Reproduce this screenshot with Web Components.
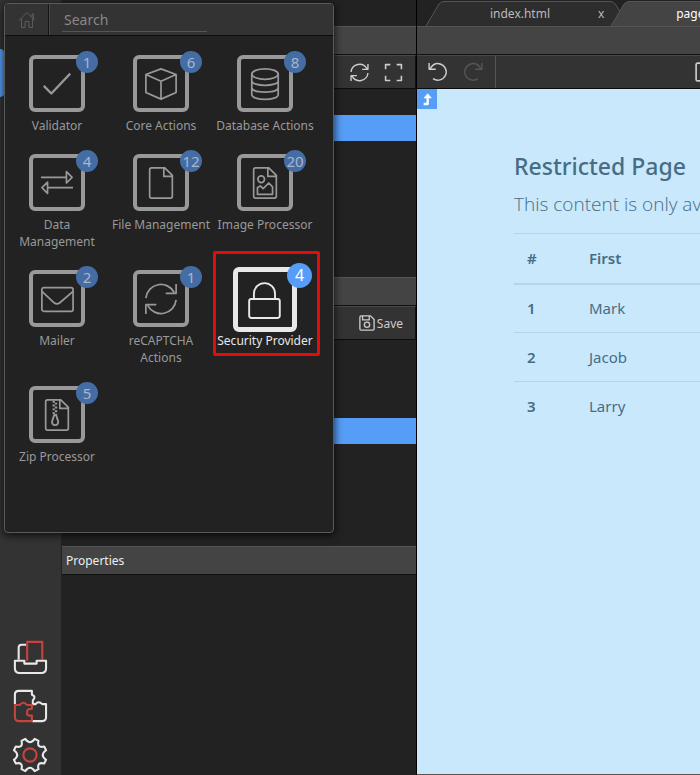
<!DOCTYPE html>
<html lang="en">
<head>
<meta charset="utf-8">
<title>App editor</title>
<style>
html,body{height:100%}
body{margin:0;background:#222;overflow:hidden;font-family:"Noto Sans","Open Sans",sans-serif;font-size:12px;line-height:17px;color:#ddd}
</style>
</head>
<body>
<app-shell></app-shell>
<script>
const ICONS = {
  check:'<path d="M4 20 12 28 32 7" stroke-width="2.4"/>',
  cube:'<path d="M18 2 34 8V27L18 34 2 27V8ZM2 8 18 15 34 8M18 15V34"/>',
  database:'<ellipse cx="18" cy="7.500" rx="14" ry="5.500"/><path d="M4 7V29C4 36 32 36 32 29V7M4 14.500C4 21 32 21 32 14.500M4 22C4 28 32 28 32 22"/>',
  swap:'<path d="M1 12H28M28 6 34 12 28 18ZM35 23H8M8 17 2 23 8 29Z"/>',
  file:'<path d="M8 2H22L30 10V32Q30 34 28 34H8Q6 34 6 32V4Q6 2 8 2ZM21 2V11H30"/>',
  image:'<path d="M8 2H22L30 10V32Q30 34 28 34H8Q6 34 6 32V4Q6 2 8 2ZM21 2V11H30M10 30V23L13 21 16 24 22 18 26 22V30Z"/><circle cx="14" cy="14" r="3.500"/>',
  mail:'<rect x="2" y="6" width="33" height="25" rx="2"/><path d="M2 10 15 22Q18 24.500 21 22L35 10"/>',
  refresh:'<path d="M2 17A16 16 0 0 1 32 11M34 19A16 16 0 0 1 4 25M34 2V12H23M2 34V24H13"/>',
  lock:'<rect x="3" y="17" width="29" height="18" rx="2"/><path d="M7.500 17V12A10 10 0 0 1 27.500 12V17"/>',
  zip:'<path d="M8 2H22L30 10V32Q30 34 28 34H8Q6 34 6 32V4Q6 2 8 2ZM21 2V11H30"/><path d="M14.500 3V18M17 5V18" stroke-width="2.500" stroke-dasharray="2 2"/><path d="M15 18H17L19 24A3.300 3.300 0 1 1 13 24Z" stroke-width="2"/>',
  home:'<path d="M2 19 18 3 34 19M7 15V33H14V21H22V33H29V15M28 12V6H31V16" stroke-width="2"/>',
  expand:'<path d="M3 12V3H12M24 3H33V12M33 24V33H24M12 33H3V24" stroke-width="3"/>',
  undo:'<path d="M2 2V13H14M4 12C8 5 14 2 20 3A15 15 0 1 1 9 30" stroke-width="2.6"/>',
  redo:'<path d="M34 2V13H22M32 12C28 5 22 2 16 3A15 15 0 1 0 27 30" stroke-width="2.6"/>',
  sync:'<path d="M2 17A16 16 0 0 1 32 11M34 19A16 16 0 0 1 4 25M34 2V12H23M2 34V24H13" stroke-width="2.6"/>',
  save:'<path d="M5 2H26L34 10V31Q34 34 31 34H5Q2 34 2 31V5Q2 2 5 2ZM8 3V11H23V3" stroke-width="3"/><circle cx="18" cy="22" r="6" stroke-width="3"/>',
  page:'<rect x="2" y="2" width="32" height="32" rx="3" stroke-width="3"/>',
  up:'<path d="M8 33H20V12" stroke-width="7"/><path d="M9 15 20 2 31 15Z" fill="currentColor"/>',
  tray:'<path d="M6 21V8Q6 5 9 5H14" stroke-width="2.2"/><path d="M15 22V2H31V21" stroke="#c9423e" stroke-width="2.2"/><path d="M2 22H12V25H25V22H35V30Q35 35 30 35H7Q2 35 2 30Z" stroke-width="2.2"/>',
  puzzle:'<path d="M2 16V6Q2 2 6 2H20V6Q25 8 21 12V16H24Q27 12 31 16H35V30Q35 34 31 34H20" stroke-width="2.2"/><path d="M2 17H7Q11 12 15 17H20V21Q14 21 15 25 14 29 20 28V34H6Q2 34 2 30Z" stroke="#c9423e" stroke-width="2.2"/>',
  gear:'<path stroke-width="2.2" d="M13 1Q18 8 23 1L27 3Q25 11 33 9L35 13Q28 18 35 23L33 27Q25 25 27 33L23 35Q18 28 13 35L9 33Q11 25 3 27L1 23Q8 18 1 13L3 9Q11 11 9 3Z"/><circle cx="18" cy="18" r="7" stroke="#c9423e" stroke-width="2.2"/>'
};

const BASE = `<style>
*{box-sizing:border-box}
button{font:inherit;color:inherit;background:none;border:0;padding:0}
</style>`;

function define(name, template, setup){
  customElements.define(name, class extends HTMLElement{
    connectedCallback(){
      if(this.shadowRoot) return;
      this.attachShadow({mode:'open'}).innerHTML = BASE + template;
      if(setup) setup(this, this.shadowRoot);
    }
  });
}

define('line-icon',`<style>
:host{display:block;flex:none;width:20px;height:20px}
svg{display:block;width:100%;height:100%;overflow:visible;fill:none;stroke:currentColor;stroke-width:1.8;stroke-linejoin:round}
</style><svg viewBox="0 0 36 36" aria-hidden="true"></svg>`,
  (el,root)=>{ root.querySelector('svg').innerHTML = ICONS[el.getAttribute('name')]; });

define('action-tile',`<style>
:host{display:block;position:relative;color:#999}
button{display:flex;flex-direction:column;align-items:center;gap:5px;width:100%}
.box{position:relative;display:grid;place-items:center;width:56px;height:57px;border:4px solid currentColor;border-radius:6px}
line-icon{width:34px;height:34px}
.badge{position:absolute;left:43px;top:-8px;width:22px;height:22px;border-radius:50%;background:#446ca5;color:#a9b6c9;font-size:15px;line-height:22px;text-align:center}
:host([active]){color:#e8e8e8}
:host([active]) .box{width:64px;height:65px;margin:-3px 0 -5px;border-width:5px}
:host([active]) line-icon{width:38px;height:38px}
:host([active]) .badge{left:49px;top:-9px;width:25px;height:25px;line-height:25px;background:#559df6;color:#fff;font-size:16px}
:host([active])::after{content:"";position:absolute;inset:-19px -3px -7px 0;border:3px solid #e30b0b;border-radius:2px;pointer-events:none}
</style><button type="button"><span class="box"><line-icon></line-icon><span class="badge"></span></span><span><slot></slot></span></button>`,
  (el,root)=>{
    const icon=document.createElement('line-icon');
    icon.setAttribute('name',el.getAttribute('icon'));
    root.querySelector('line-icon').replaceWith(icon);
    root.querySelector('.badge').textContent=el.getAttribute('count');
  });

define('action-picker',`<style>
:host{display:flex;flex-direction:column;background:#222;border:1px solid #5a5a5a;border-radius:4px;box-shadow:0 2px 8px #000c;overflow:hidden}
header{display:flex;align-items:stretch;height:32px;flex:none;background:#333;border-bottom:1px solid #0c0c0c}
.home{display:grid;place-items:center;width:44px;color:#5c5c5c;border-right:1px solid #151515}
.home line-icon{width:18px;height:18px}
.find{flex:1;border-left:1px solid #484848;padding:3px 0 0 12px}
input{width:145px;height:25px;padding:0 2px;background:none;border:0;border-bottom:1px solid #555;outline:0;font:14px/20px "Noto Sans","Open Sans",sans-serif;color:#ddd}
input::placeholder{color:#888;opacity:1}
.grid{display:grid;grid-template-columns:repeat(3,104px);align-items:start;row-gap:20px;padding-top:19px}
</style>
<header><button class="home" type="button" aria-label="Home"><line-icon name="home"></line-icon></button>
<div class="find"><input type="text" placeholder="Search" aria-label="Search"></div></header>
<div class="grid">
<action-tile icon="check" count="1">Validator</action-tile>
<action-tile icon="cube" count="6">Core Actions</action-tile>
<action-tile icon="database" count="8">Database Actions</action-tile>
<action-tile icon="swap" count="4">Data Management</action-tile>
<action-tile icon="file" count="12">File Management</action-tile>
<action-tile icon="image" count="20">Image Processor</action-tile>
<action-tile icon="mail" count="2">Mailer</action-tile>
<action-tile icon="refresh" count="1">reCAPTCHA Actions</action-tile>
<action-tile icon="lock" count="4" active>Security Provider</action-tile>
<action-tile icon="zip" count="5">Zip Processor</action-tile>
</div>`);

define('side-rail',`<style>
:host{display:flex;flex-direction:column;background:#333}
.current{width:5px;height:48px;margin-top:49px;background:#559df6;border-radius:0 8px 8px 0}
nav{display:flex;flex-direction:column;align-items:center;gap:15px;margin-top:auto;padding:0 2px 3px 0;color:#e8e8e8}
nav line-icon{width:34px;height:34px}
</style><div class="current"></div>
<nav><button type="button" aria-label="Tray"><line-icon name="tray"></line-icon></button>
<button type="button" aria-label="Extensions"><line-icon name="puzzle"></line-icon></button>
<button type="button" aria-label="Settings"><line-icon name="gear"></line-icon></button></nav>`);

define('tool-bar',`<style>
:host{display:flex;align-items:center;height:34px;flex:none;background:#333;border-top:1px solid #484848;border-bottom:1px solid #0c0c0c;color:#ccc}
</style><slot></slot>`);

define('dock-section',`<style>
:host{display:flex;flex-direction:column;min-height:0}
h2{margin:0;flex:none;height:29px;padding:4px;background:#444;border-top:1px solid #555;border-bottom:1px solid #111;font-size:12px;line-height:20px;font-weight:400;color:#eee}
</style><h2><slot name="title"></slot></h2><slot></slot>`);

define('dock-panel',`<style>
:host{display:flex;flex-direction:column;padding:26px 0 1px 1px;border-right:1px solid #000}
.one{flex:251 1 0}.two{flex:269 1 0}.three{flex:228 1 0}
tool-bar{justify-content:flex-end;gap:15px;padding-right:12px;border-right:1px solid #111}
tool-bar line-icon{width:19px;height:19px}
ul{list-style:none;margin:0;padding:0}
li{height:26px}
.on{background:#559df6}
.save{display:flex;align-items:center;gap:2px}
.save line-icon{width:16px;height:16px}
</style>
<dock-section class="one"><tool-bar><button type="button" aria-label="Refresh"><line-icon name="sync"></line-icon></button><button type="button" aria-label="Expand"><line-icon name="expand"></line-icon></button></tool-bar><ul><li></li><li class="on"></li></ul></dock-section>
<dock-section class="two"><tool-bar><button class="save" type="button"><line-icon name="save"></line-icon>Save</button></tool-bar><ul><li></li><li></li><li></li><li class="on"></li></ul></dock-section>
<dock-section class="three"><span slot="title">Properties</span></dock-section>`);

define('file-tab',`<style>
:host{display:grid;position:relative;flex:none;grid-template-columns:150px 1fr;column-gap:3px;align-items:center;width:200px;height:25px;padding-left:19px;color:#bbb;--fill:#2d2d2d}
:host([active]){color:#fff;--fill:#444}
svg{position:absolute;inset:0;width:100%;height:100%;overflow:visible}
path{fill:var(--fill);stroke:#555}
.name{position:relative;text-align:center}
.close{position:relative;justify-self:start}
</style><svg viewBox="0 0 200 25" aria-hidden="true"><path d="M0 25 13 3Q15 .5 18 .5H184Q188 .5 190 4L202 25"/></svg><button class="name" type="button"><slot></slot></button><button class="close" type="button" aria-label="Close tab">x</button>`);

define('design-view',`<style>
:host{display:block;position:relative;flex:1;min-height:0;overflow:hidden;background:#c9e8fb;padding:61px 0 0 97px;color:#466d85;border-bottom:1px solid #555}
.up{position:absolute;left:0;top:0;display:grid;place-items:center;width:20px;height:20px;background:#559df6;color:#fff}
.up line-icon{width:12px;height:12px}
h1{margin:0 0 7px;font-size:23px;line-height:32px;font-weight:500;white-space:nowrap}
p{margin:0 0 14px;font:300 19px/30px "Open Sans","Noto Sans",sans-serif;white-space:nowrap}
table{width:100%;table-layout:fixed;border-collapse:collapse;font-size:15px;line-height:24px;text-align:left}
th,td{height:49px;padding:0 13px;border-top:1px solid #b2d5ea;font-weight:400}
tr>:first-child{width:62px}
th{font-weight:600}
thead th{height:50px;border-bottom:2px solid #b2d5ea}
</style>
<button class="up" type="button" aria-label="Select parent"><line-icon name="up"></line-icon></button>
<h1>Restricted Page</h1><p>This content is only available</p>
<table><thead><tr><th scope="col">#</th><th scope="col">First</th></tr></thead>
<tbody><tr><th scope="row">1</th><td>Mark</td></tr><tr><th scope="row">2</th><td>Jacob</td></tr><tr><th scope="row">3</th><td>Larry</td></tr></tbody></table>`);

define('page-canvas',`<style>
:host{display:flex;flex-direction:column;min-width:0;overflow:hidden}
.tabs{display:flex;align-items:flex-end;height:26px;flex:none;padding-left:9px}
file-tab+file-tab{margin-left:-15px}
.head{height:29px;flex:none;background:#444;border-top:1px solid #555;border-bottom:1px solid #111}
.history{display:flex;align-items:center;gap:15px;height:100%;width:79px;padding-left:11px;border-right:1px solid #555;flex:none}
.history :disabled{color:#555}
.device{margin-left:199px;flex:none}
</style>
<div class="tabs"><file-tab>index.html</file-tab><file-tab active>page.html</file-tab></div>
<div class="head"></div>
<tool-bar><div class="history"><button type="button" aria-label="Undo"><line-icon name="undo"></line-icon></button><button type="button" aria-label="Redo" disabled><line-icon name="redo"></line-icon></button></div><button class="device" type="button" aria-label="Device"><line-icon name="page"></line-icon></button></tool-bar>
<design-view></design-view>`);

define('app-shell',`<style>
:host{display:grid;position:relative;grid-template-columns:61px 356px minmax(0,1fr);grid-template-rows:minmax(0,1fr);height:100vh}
action-picker{position:absolute;left:4px;top:3px;width:330px;height:530px}
</style><side-rail></side-rail><dock-panel></dock-panel><page-canvas></page-canvas><action-picker></action-picker>`);
</script>
</body>
</html>
